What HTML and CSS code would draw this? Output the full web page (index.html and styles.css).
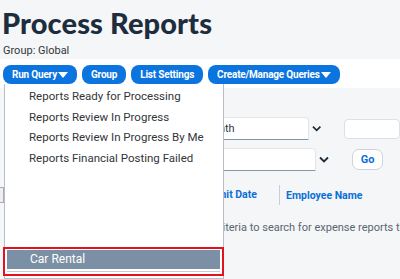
FILE: index.html
```html
<!DOCTYPE html>
<html>
<head>
<meta charset="utf-8">
<link rel="stylesheet" href="styles.css">
</head>
<body>
<header class="head">
  <h1 class="title">Process Reports</h1>
  <div class="group">Group: Global</div>
</header>
<nav class="toolbar">
  <button class="btn">Run Query<span class="caret"></span></button>
  <button class="btn">Group</button>
  <button class="btn">List Settings</button>
  <button class="btn">Create/Manage Queries<span class="caret"></span></button>
</nav>
<main class="content">
  <div class="filters">
    <div class="row">
      <div class="select">Month</div>
      <svg class="chev" width="10" height="7" viewBox="0 0 10 7"><path d="M1 1.5 L5 5.5 L9 1.5" fill="none" stroke="#1d2d3e" stroke-width="1.8"/></svg>
      <div class="input"></div>
    </div>
    <div class="row">
      <div class="select"></div>
      <svg class="chev" width="10" height="7" viewBox="0 0 10 7"><path d="M1 1.5 L5 5.5 L9 1.5" fill="none" stroke="#1d2d3e" stroke-width="1.8"/></svg>
      <button class="go">Go</button>
    </div>
  </div>
  <div class="thead">
    <span class="chk"></span>
    <span class="th th-date">Submit Date</span>
    <span class="th th-emp">Employee Name</span>
  </div>
  <p class="empty">Choose criteria to search for expense reports that need processing.</p>
</main>
<div class="menu">
  <ul class="items">
    <li>Reports Ready for Processing</li>
    <li>Reports Review In Progress</li>
    <li>Reports Review In Progress By Me</li>
    <li>Reports Financial Posting Failed</li>
  </ul>
  <div class="selected"><div class="sel-item">Car Rental</div></div>
</div>
</body>
</html>
```

FILE: styles.css
```css
html, body { margin: 0; padding: 0; }
body {
  width: 400px;
  height: 279px;
  overflow: hidden;
  background: #f5f6f7;
  font-family: Roboto, "Open Sans", sans-serif;
  position: relative;
}
.head { padding: 5px 0 0 2px; height: 54px; box-sizing: border-box; }
.title {
  margin: 0;
  font-family: Lato, sans-serif;
  font-weight: 900;
  font-size: 29px;
  line-height: 36px;
  color: #1d2d3e;
  letter-spacing: 0.1px;
}
.group { font-size: 11px; color: #32363a; margin: 3px 0 0 1px; line-height: 13px; }
.toolbar {
  background: #ffffff;
  height: 29px;
  margin-top: 5px;
  display: flex;
  align-items: flex-start;
  gap: 5px;
  padding: 6px 0 0 3px;
  box-sizing: border-box;
}
.btn {
  background: #0b74de;
  color: #fff;
  border: 0;
  border-radius: 8px;
  height: 19px;
  padding: 0 9px;
  font-family: Roboto, sans-serif;
  font-weight: 700;
  font-size: 10px;
  letter-spacing: -0.2px;
  display: flex;
  align-items: center;
}
.caret {
  width: 0; height: 0;
  border-left: 5px solid transparent;
  border-right: 5px solid transparent;
  border-top: 6px solid #fff;
  margin-left: 1px;
}
.content { padding: 29px 0 0 150px; overflow: hidden; height: 190px; box-sizing: border-box; }
.filters { display: flex; flex-direction: column; gap: 8px; }
.row { display: flex; align-items: center; height: 23px; }
.select {
  width: 166px; height: 23px; box-sizing: border-box;
  background: #fff;
  border: 1px solid #e5e5e5;
  border-bottom: 1px solid #8696a9;
  border-radius: 4px 4px 0 0;
  font-size: 11px;
  color: #32363a;
  padding: 4px 0 0 52px;
  line-height: 14px;
}
.chev { margin: 0 23px 0 3px; }
.input {
  width: 60px; height: 20px; box-sizing: border-box;
  background: #fff; border: 1px solid #dcdfe3; border-radius: 4px;
}
.go {
  width: 31px; height: 21px;
  background: #fff; border: 1px solid #cfd4da; border-radius: 7px;
  color: #0b6fd8; font-weight: 700; font-size: 11px;
  font-family: Roboto, sans-serif; padding: 0;
}
.thead { display: flex; align-items: center; height: 22px; margin-top: 13px; margin-left: -150px; }
.chk { width: 4px; height: 14px; border: 1px solid #aab; background: #eee; margin-left: -2px; }
.th { color: #0b6fd8; font-weight: 700; font-size: 10.5px; }
.th-date { margin-left: 195px; padding-right: 22px; border-right: 1px solid #c9ced4; line-height: 20px; }
.th-emp { margin-left: 6px; }
.empty { margin: 15px 0 0 23px; font-size: 11px; color: #5b6570; white-space: nowrap; }
.menu {
  position: absolute;
  left: 4px; top: 84px;
  width: 220px; height: 195px;
  box-sizing: border-box;
  background: #fff;
  border: 1px solid #b8bec5;
  border-top: 0;
}
.items { list-style: none; margin: 0; padding: 2px 0 0 24px; }
.items li { font-size: 11.5px; color: #32363a; line-height: 20.5px; }
.selected {
  position: absolute;
  left: -2px; top: 163px;
  width: 221px; height: 29px;
  box-sizing: border-box;
  border: 2px solid #e3121f;
  background: #fff;
  padding: 1px 2px 0 2px;
}
.sel-item {
  background: #7b8fa5;
  color: #fff;
  font-size: 12px;
  height: 19px;
  line-height: 19px;
  padding-left: 23px;
  border-bottom: 2px solid #fff;
  box-shadow: 0 1px 0 #c5ccd4;
}
```
